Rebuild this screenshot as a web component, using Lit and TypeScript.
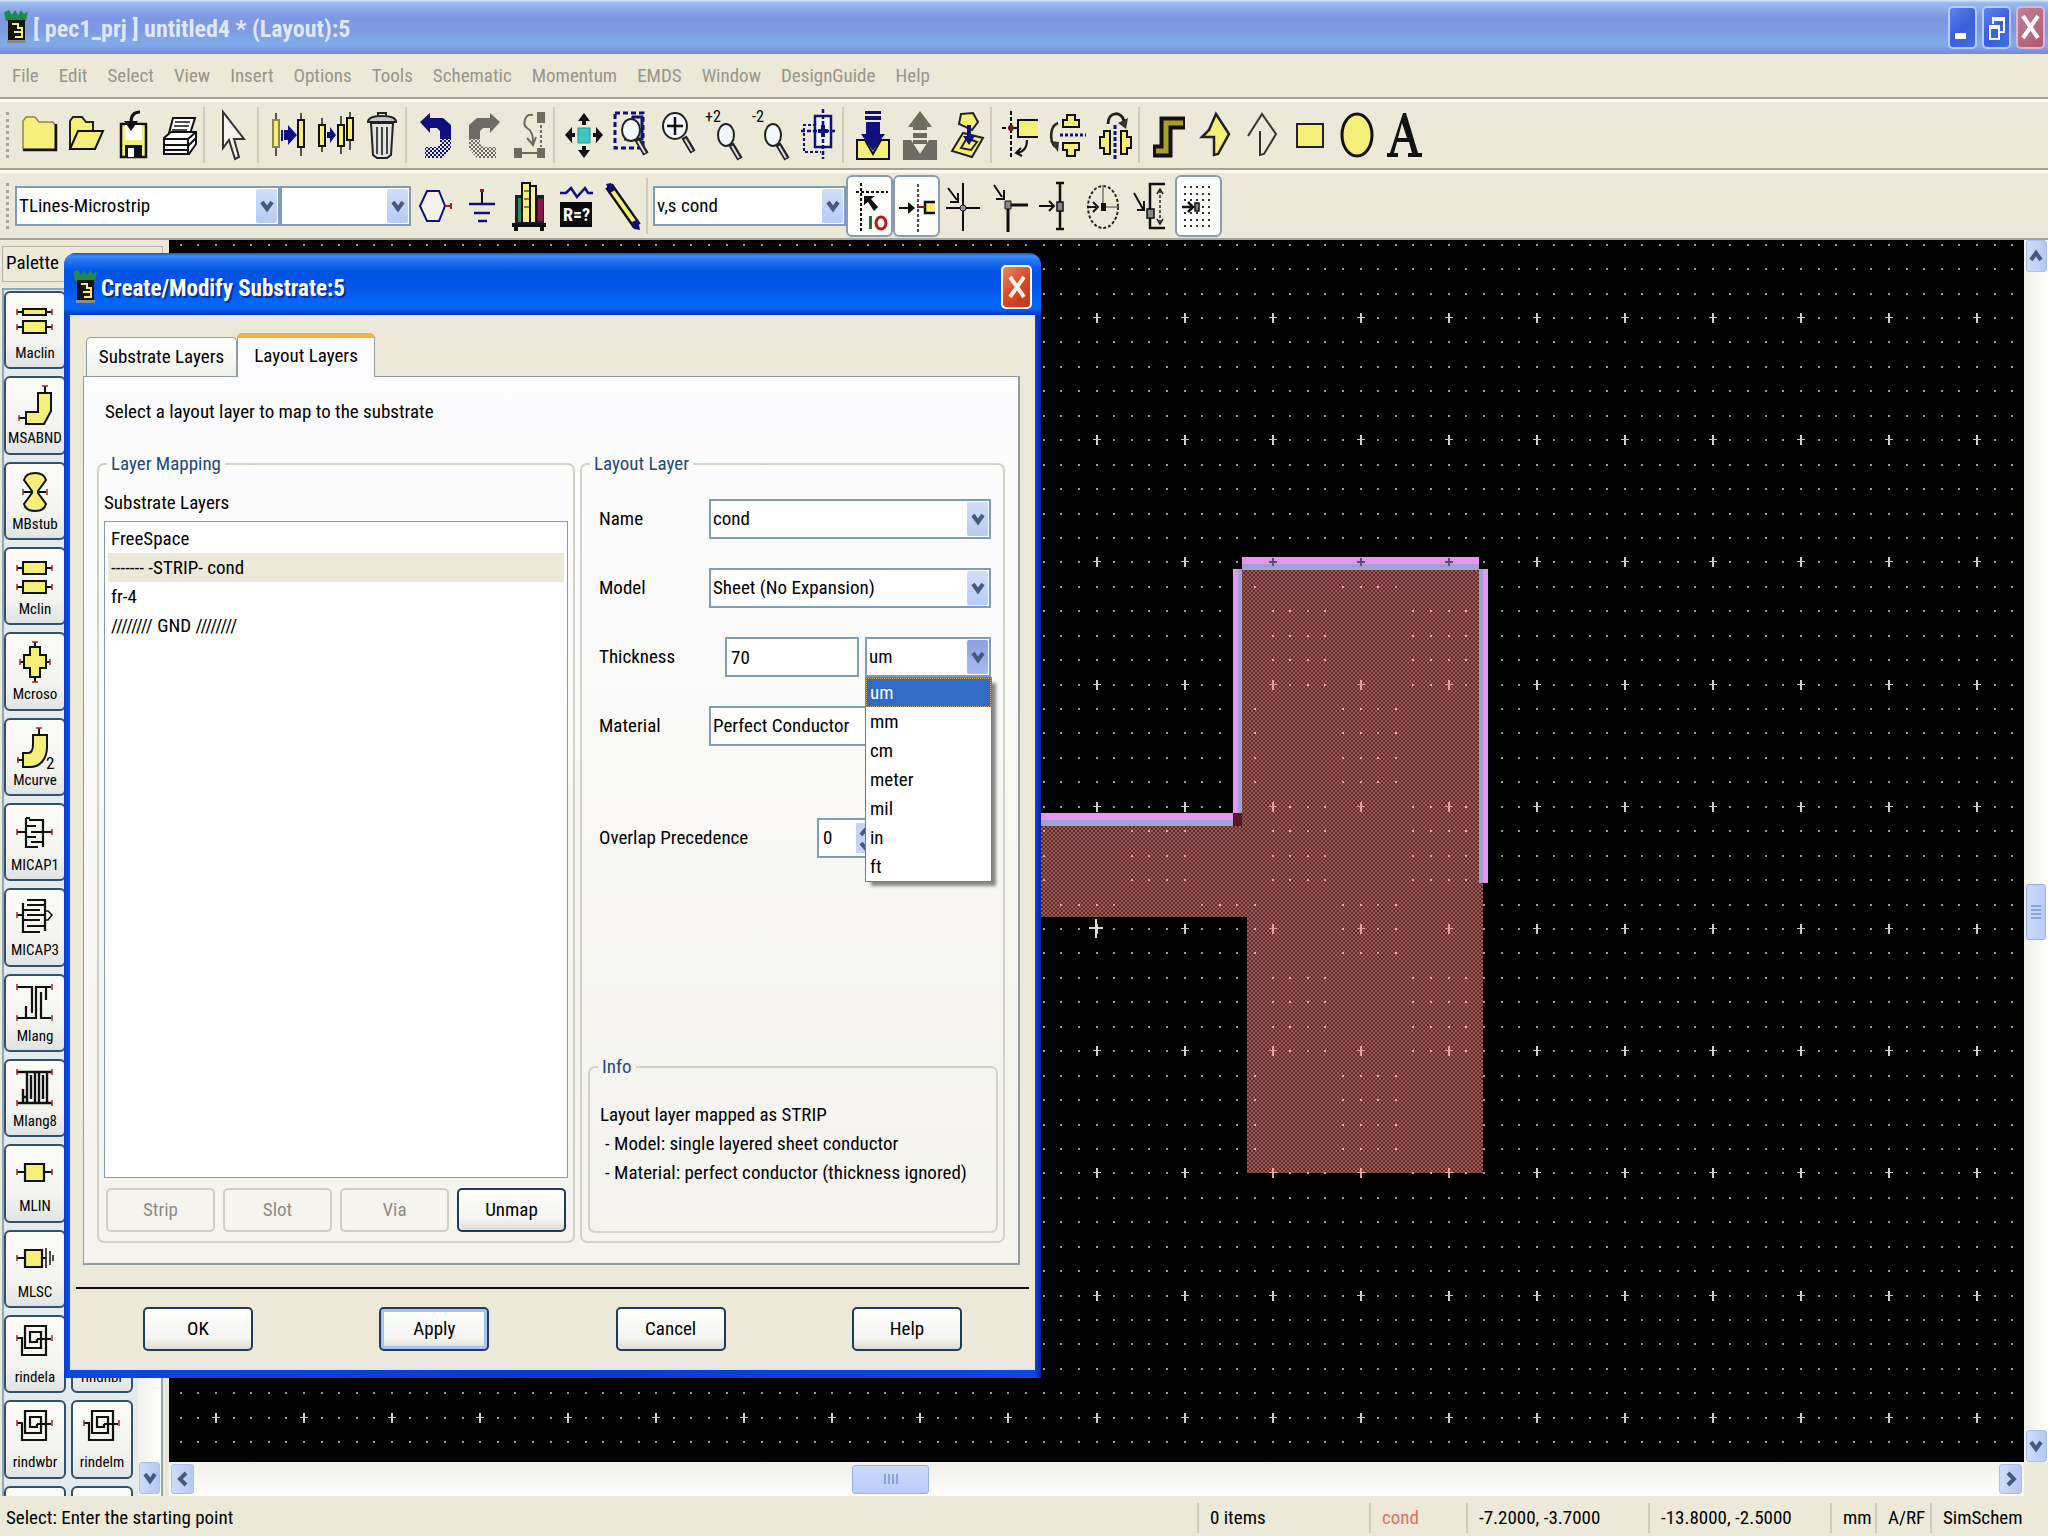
import { LitElement, html, svg, css, nothing } from "lit";
import { customElement, state } from "lit/decorators.js";
import { classMap } from "lit/directives/class-map.js";

const Y = "#f5ee78";
const N = "#10107c";
const G = "#6e6c62";

/* Toolbar icons share a 40 x 54 box. */
const lens = (cx: number, cy: number, r: number, ry: number) => svg`
  <ellipse cx=${cx} cy=${cy} rx=${r} ry=${ry} fill="#f4f8fa" stroke="#222" stroke-width="2"/>
  <path d=${`M${cx + r - 3} ${cy + ry - 2}l9 15`} stroke="#222" stroke-width="6"/>
  <path d=${`M${cx + r - 2} ${cy + ry}l7 12`} stroke="#ddd" stroke-width="2"/>`;

const checker = (id: string, color: string) => svg`<defs><pattern id=${id} width="4" height="4" patternUnits="userSpaceOnUse"><path d="M0 0h2v2H0zM2 2h2v2H2z" fill=${color}/></pattern></defs>`;

const icons: Record<string, unknown> = {
  folder: svg`<path d="M4 41V13l3-4h9l4 5h14l2 3v24z" fill=${Y} stroke="#8a8850" stroke-width="1.5"/><path d="M4 42h33V16" fill="none" stroke="#111" stroke-width="2.5"/>`,
  open: svg`<path d="M4 41V13l3-4h9l4 5h7v8" fill=${Y} stroke="#222" stroke-width="2"/><path d="M4 41l8-18h25l-8 18z" fill=${Y} stroke="#111" stroke-width="2"/>`,
  save: svg`<path d="M8 16h25v33H8z" fill=${Y} stroke="#111" stroke-width="2.5"/><path d="M12 17h17v15H12z" fill="#fff"/><path d="M12 37h17v12H12z" fill="#111"/><path d="M15 40h6v9h-6z" fill="#fff"/><path d="M27 4c-7 0-9 4-9 10" fill="none" stroke="#111" stroke-width="3"/><path d="M11 13h14l-7 10z" fill="#111"/>`,
  print: svg`<path d="M13 10h22l-6 19H8z" fill="#fff" stroke="#111" stroke-width="2"/><path d="M15 14h15M14 18h15M12 22h15M11 26h15" stroke="#111" stroke-width="1.5"/><path d="M4 30l7-6h25v12l-7 10H4z" fill="#fff" stroke="#111" stroke-width="2"/><path d="M4 31h24v15M4 37h24M4 42h24M28 31l8-7M28 38l8-8" fill="none" stroke="#111" stroke-width="2"/>`,
  arrow: svg`<path d="M9 4v36l6-8 6 19 4-2-5-18h10z" fill="#f6f5ee" stroke="#333" stroke-width="2"/>`,
  copy: svg`<path d="M8 5v43M33 5v43" stroke="#222" stroke-width="1.5"/><path d="M5 12h6v27H5z" fill=${Y} stroke="#8a8850" stroke-width="2"/><path d="M30 12h6v27h-6z" fill=${Y} stroke="#111" stroke-width="2"/><path d="M13 22h2v11h-2zM16 22h4v-5l9 10-9 10v-5h-4z" fill=${N}/>`,
  copymany: svg`<path d="M7 10v34M26 8v38M35 4v38" stroke="#222" stroke-width="1.5"/><path d="M4 17h6v21H4z" fill=${Y} stroke="#111" stroke-width="2"/><path d="M23 17h6v21h-6zM32 10h6v22h-6z" fill=${Y} stroke="#111" stroke-width="2"/><path d="M12 24h3v-5l6 8-6 8v-5h-3z" fill=${N}/>`,
  trash: svg`<path d="M9 15h22l-2 32-4 3H15l-4-3z" fill="#e4e4e0" stroke="#222" stroke-width="2"/><path d="M15 19v27M20 19v28M25 19v27" stroke="#444" stroke-width="2"/><path d="M6 14c0-5 6-6 14-6s14 1 14 6z" fill="#c8c8c4" stroke="#222" stroke-width="2"/><path d="M16 8V5h8v3" fill="none" stroke="#222" stroke-width="2"/>`,
  undo: svg`${checker("weave-navy", N)}<path d="M4 14L14 5v5h13l8 7v14H24v-8l-3-3h-7v5z" fill=${N}/><path d="M24 31h11v10l-8 9H9V39h12l3-3z" fill="url(#weave-navy)"/>`,
  redo: svg`${checker("weave-gray", G)}<path d="M37 14L27 5v5H14l-8 7v14h11v-8l3-3h7v5z" fill=${G}/><path d="M17 31H6v10l8 9h19V39H20l-3-3z" fill="url(#weave-gray)"/>`,
  goto: svg`<path d="M27 4h8v11h-8zM4 40h8v10H4zM27 40h8v10h-8z" fill=${G}/><path d="M12 45h15" stroke=${G} stroke-width="2"/><path d="M31 17v22" stroke=${G} stroke-width="2" stroke-dasharray="3 2"/><path d="M23 7c-8-2-11 9-6 13 5 3 6 7 6 16M17 30l6 7 3-8" fill="none" stroke=${G} stroke-width="2"/>`,
  move: svg`<path d="M14 20h12v15H14z" fill="#3cc8c0" stroke="#1a9890"/><path d="M20 5l6 8h-4v4h-4v-4h-4zM20 50l6-8h-4v-4h-4v4h-4zM1 27l7-8v6h3v4H8v6zM39 27l-7-8v6h-3v4h3v6z" fill="#111"/>`,
  zoomarea: svg`<path d="M4 5h28v35H4z" fill="none" stroke=${N} stroke-width="3" stroke-dasharray="5 3"/><path d="M22 9h9v22H15z" fill="none" stroke=${N} stroke-width="3"/>${lens(20, 22, 9, 11)}`,
  zoom: svg`${lens(17, 18, 12, 13)}<path d="M9 18h16M17 9v18" stroke="#111" stroke-width="2.5"/>`,
  zoomin: svg`<text x="0" y="14" font-size="16" font-family="Roboto Condensed, Liberation Sans, sans-serif">+2</text>${lens(21, 27, 8, 11)}`,
  zoomout: svg`<text x="0" y="14" font-size="16" font-family="Roboto Condensed, Liberation Sans, sans-serif">-2</text>${lens(21, 27, 8, 11)}`,
  fit: svg`<path d="M17 17H5v27h17" fill="none" stroke=${N} stroke-width="2" stroke-dasharray="3 2"/><path d="M16 8h16v31H16z" fill="#f2f6ff" stroke=${N} stroke-width="2.5"/><path d="M24 1v50M2 23h36" stroke=${N} stroke-width="2.5" stroke-dasharray="4 2"/><path d="M19 23h10M24 17v12" stroke=${N} stroke-width="4"/>`,
  pushdown: svg`<path d="M4 32h8l8 14 8-14h8v19H4z" fill=${Y} stroke="#111" stroke-width="2"/><path d="M12 3h16v3H12zM12 8h16v4H12zM13 14h14v12h5L20 43 8 26h5z" fill=${N}/>`,
  popup: svg`<path d="M3 32h8l9 14 9-14h8v20H3z" fill=${G}/><path d="M20 3l12 16h-5v3H13v-3H8zM13 25h14v5H13zM13 32h14v4H13z" fill=${G}/>`,
  insertinto: svg`<path d="M5 43l11-18 20 5-11 19z" fill=${Y} stroke="#222" stroke-width="2"/><path d="M14 6l12-1 5 9-6 8-13-6z" fill=${Y} stroke="#222" stroke-width="2"/><path d="M14 40l6-10 10 4-6 8z" fill="none" stroke="#222" stroke-width="2"/><path d="M20 17h4v11h4l-6 9-6-9h4z" fill=${N}/>`,
  rotate: svg`<path d="M10 3v48M1 20h16" stroke="#111" stroke-width="2" stroke-dasharray="4 2"/><path d="M37 12H17v17h20" fill=${Y} stroke="#111" stroke-width="2"/><circle cx="10" cy="20" r="3" fill="#6a2020"/><path d="M26 32c0 8-3 12-10 13M20 40l-5 5 6 3" fill="none" stroke="#111" stroke-width="2"/>`,
  mirrorx: svg`<path d="M15 19h16v-7h-4V7h-8v5h-4zM15 35h16v7h-4v6h-8v-6h-4z" fill=${Y} stroke="#111" stroke-width="2"/><path d="M12 27h26" stroke=${N} stroke-width="3" stroke-dasharray="3 2"/><path d="M10 15c-8 3-9 17-3 24" fill="none" stroke="#222" stroke-width="2.5"/><path d="M2 33l9 1-1 10z" fill="#333"/>`,
  mirrory: svg`<path d="M15 23v23H9v-6H5V29h4v-6zM26 23v23h6v-6h4V29h-4v-6z" fill=${Y} stroke="#111" stroke-width="2"/><path d="M20 17v36" stroke=${N} stroke-width="3" stroke-dasharray="4 2"/><path d="M13 16c0-13 14-13 16-3" fill="none" stroke="#222" stroke-width="3"/><path d="M33 10l-2 11-8-6z" fill="#333"/>`,
  trace: svg`<path d="M4 43h13V15h19" fill="none" stroke="#111" stroke-width="13"/><path d="M7 43h10V15h17" fill="none" stroke="#a89e28" stroke-width="5"/>`,
  polygon: svg`<path d="M20 6l13 20-11 20-4 1V29H6l7-7z" fill=${Y} stroke="#222" stroke-width="2.5"/>`,
  polyline: svg`<path d="M5 28L19 6l14 20-12 20-4 1V23" fill="none" stroke="#333" stroke-width="2"/>`,
  rect: svg`<path d="M7 16h26v23H7z" fill=${Y} stroke="#222" stroke-width="2"/>`,
  circle: svg`<ellipse cx="20" cy="27" rx="15" ry="21" fill=${Y} stroke="#111" stroke-width="3"/>`,
  text: svg`<path d="M19 5h3l12 40h4v4H24v-4h4l-3-11H13l-3 11h4v4H3v-4h3zM18 15l-4 15h9z" fill="#111" fill-rule="evenodd"/>`,
  port: svg`<path d="M12 12h12l6 15-6 15H12L5 27z" fill="#f4f2ea" stroke=${N} stroke-width="2"/><path d="M30 27h6M36 24v6" stroke="#a02020" stroke-width="2"/>`,
  ground: svg`<path d="M20 12v13" stroke="#111" stroke-width="2"/><path d="M18 10h4v3h-4z" fill="#a02020"/><path d="M7 25h26M12 34h16M16 42h9" stroke=${N} stroke-width="2.5"/>`,
  library: svg`<path d="M6 16h7v28H6zM27 16h8v28h-8z" fill="#222"/><path d="M29 20h5v22h-5z" fill="#8a1848"/><path d="M9 19h3v24H9z" fill="#2a8a6a"/><path d="M13 4h8v40h-8z" fill=${Y} stroke="#111" stroke-width="2"/><path d="M15 12h5M15 20h5M15 28h5" stroke="#111"/><path d="M21 7h6v37h-6z" fill="#f4f0a0" stroke="#111" stroke-width="2"/><path d="M3 44h34v4H3zM5 47h4v5H5zM31 47h4v5h-4z" fill="#111"/>`,
  variable: svg`<path d="M4 14h6l5-5 6 9 8-9 3 5h5" fill="none" stroke=${N} stroke-width="2.5"/><path d="M4 23h32v25H4z" fill="#0a0a0a"/><text x="7" y="42" font-size="18" font-weight="700" font-family="Roboto Condensed, Liberation Sans, sans-serif" fill="#fff">R=?</text>`,
  wire: svg`<path d="M6 7l28 40" stroke="#111" stroke-width="9"/><path d="M8 10l24 34" stroke=${Y} stroke-width="4"/><path d="M3 5l5-1 4 7-5 3zM29 43l6-3 2 11-6-1z" fill=${N}/>`,
  snap: svg`<path d="M11 4v48M6 13h32" stroke="#111" stroke-width="2" stroke-dasharray="3 2"/><path d="M14 17h11l-4 3 7 8-4 4-6-9-4 3z" fill="#111"/><path d="M19 37h3v13h-3z" fill="#207a20"/><ellipse cx="31" cy="44" rx="5" ry="6" fill="none" stroke="#b81818" stroke-width="3"/>`,
  snappin: svg`<path d="M21 5v48" stroke="#111" stroke-width="1.5" stroke-dasharray="3 2"/><path d="M2 28h9v-5l7 6-7 6v-5H2z" fill="#111"/><path d="M38 23H28v11h10" fill=${Y} stroke="#111" stroke-width="2.5"/><path d="M20 28h8" stroke="#722" stroke-width="2"/>`,
  snapcross: svg`<path d="M19 4v48M2 29h34" stroke="#111" stroke-width="2"/><path d="M4 9l9 12M14 14v9h-8" fill="none" stroke="#111" stroke-width="2"/><circle cx="19" cy="29" r="3" fill="#999" stroke="#111"/>`,
  snapcorner: svg`<path d="M17 53V26h20" fill="none" stroke="#111" stroke-width="3"/><path d="M3 6l8 12M13 11v9H5" fill="none" stroke="#111" stroke-width="2"/><path d="M14 22h6v8h-6z" fill="#888" stroke="#111"/>`,
  snapmid: svg`<path d="M22 4v46M18 4h8M18 50h8" stroke="#111" stroke-width="2.5"/><path d="M1 27h14M11 22l5 5-5 5" fill="none" stroke="#111" stroke-width="2"/><path d="M19 23h6v9h-6z" fill="#888" stroke="#111" stroke-width="1.5"/>`,
  snaparc: svg`<ellipse cx="18" cy="28" rx="15" ry="21" fill="none" stroke="#222" stroke-width="2" stroke-dasharray="3 2"/><path d="M18 6v22h15" fill="none" stroke="#777" stroke-width="1.5"/><path d="M2 28h9M8 23l5 5-5 5" fill="none" stroke="#111" stroke-width="2"/><path d="M16 24h5v8h-5z" fill="#111"/>`,
  snapedge: svg`<path d="M33 5H18v44h15" fill="none" stroke="#111" stroke-width="2.5"/><path d="M28 11v33" stroke="#222" stroke-width="1.5" stroke-dasharray="3 2"/><path d="M25 15l3-5 3 5M25 40l3 5 3-5" fill="none" stroke="#222" stroke-width="1.5"/><path d="M2 14l9 16M12 22v9H5" fill="none" stroke="#111" stroke-width="2"/><path d="M15 30h7v9h-7z" fill="#888" stroke="#111" stroke-width="1.5"/>`,
  snapgrid: svg`<path d="M5 8h30M5 15h30M5 21h30M5 34h30M5 41h30M5 47h30M23 28h12" stroke="#333" stroke-width="2" stroke-dasharray="2 4"/><path d="M3 28h9M9 23l5 5-5 5" fill="none" stroke="#111" stroke-width="2.5"/><path d="M16 24h4v8h-4z" fill="#888" stroke="#111" stroke-width="1.5"/>`,
};

/* Palette symbols share a 40 x 44 box. */
const ports = (y: number, a = 8, b = 31) => svg`
  <path d=${`M2 ${y}H${a}M${b} ${y}H37`} stroke="#111" stroke-width="2"/>
  <path d=${`M2 ${y - 3}v6M37 ${y - 3}v6`} stroke="#a02828" stroke-width="1.5"/>`;
const spiral = svg`<path d="M2 15h5v17h24V3H10v22h16V9H15v10h7v-3" fill="none" stroke="#111" stroke-width="2.2"/><path d="M22 16h14" stroke="#111" stroke-width="2"/><path d="M2 12v6M37 12v6" stroke="#a02828" stroke-width="1.5"/>`;

const symbols: Record<string, unknown> = {
  Maclin: svg`${ports(13)}${ports(28)}<path d="M8 10h23v6H8zM8 22h23v12H8z" fill=${Y} stroke="#111" stroke-width="2"/>`,
  MSABND: svg`<path d="M11 28h12V9h13v18l-7 13H11z" fill=${Y} stroke="#111" stroke-width="2"/><path d="M4 34h7M30 2v7" stroke="#111" stroke-width="2"/><path d="M4 31v6M27 2h6" stroke="#a02828" stroke-width="1.5"/>`,
  MBstub: svg`<path d="M8 22h23" stroke="#111" stroke-width="2"/><path d="M8 19v6M32 19v6" stroke="#a02828" stroke-width="1.5"/><path d="M17 21L9 10c1-4 4-7 11-7s10 3 11 7l-8 11v2l8 11c-1 4-4 7-11 7s-10-3-11-7l8-11z" fill=${Y} stroke="#111" stroke-width="2"/>`,
  Mclin: svg`${ports(13)}${ports(32)}<path d="M8 7h23v12H8zM8 26h23v12H8z" fill=${Y} stroke="#111" stroke-width="2"/>`,
  Mcroso: svg`<path d="M5 22h30M20 2v40" stroke="#111" stroke-width="2"/><path d="M5 19v6M35 19v6M17 2h6M17 42h6" stroke="#a02828" stroke-width="1.5"/><path d="M15 7h10v8h6v13h-6v9H15v-9H9V15h6z" fill=${Y} stroke="#111" stroke-width="2"/>`,
  Mcurve: svg`<path d="M24 2v8M2 34h7" stroke="#111" stroke-width="2"/><path d="M21 2h6M3 31v6" stroke="#a02828" stroke-width="1.5"/><path d="M18 9h14v12c0 12-7 20-17 20H8V27h5c4 0 5-4 5-9z" fill=${Y} stroke="#111" stroke-width="2"/><text x="31" y="43" font-size="17" font-family="Roboto Condensed, Liberation Sans, sans-serif">2</text>`,
  MICAP1: svg`${ports(21, 10, 28)}<path d="M11 7v29h12M11 15h10M11 26h10M11 36h12M14 9h14v27M28 21H16M28 31H16M11 7h4" fill="none" stroke="#111" stroke-width="2.2"/>`,
  MICAP3: svg`<path d="M2 19h6" stroke="#111" stroke-width="2"/><path d="M2 16v6" stroke="#a02828" stroke-width="1.5"/><path d="M8 7v29h17M8 14h17M8 24h17M12 4h18v31M30 9H12M30 19H12M30 30H12" fill="none" stroke="#111" stroke-width="2.2"/><path d="M31 15h2l4 4-4 5h-2" fill="none" stroke="#111" stroke-width="1.5"/>`,
  Mlang: svg`<path d="M2 5h15v26M36 5H21v31H2M26 10v26h10M31 5v13M11 24v12" fill="none" stroke="#111" stroke-width="2.2"/><path d="M2 2v6M37 2v6M2 33v6M37 33v6" stroke="#a02828" stroke-width="1.5"/>`,
  Mlang8: svg`<path d="M2 5h35M2 36h35M8 22v14M12 5v24M12 12v24M16 8v24M20 5v31M24 5v31M24 12v24M28 8v24M32 5v31M8 30h4" fill="none" stroke="#111" stroke-width="2.4"/><path d="M2 2v6M37 2v6M2 33v6M37 33v6" stroke="#a02828" stroke-width="1.5"/>`,
  MLIN: svg`${ports(20, 10, 29)}<path d="M10 12h19v17H10z" fill=${Y} stroke="#111" stroke-width="2.2"/>`,
  MLSC: svg`<path d="M2 20h8M27 20h4" stroke="#111" stroke-width="2"/><path d="M2 17v6" stroke="#a02828" stroke-width="1.5"/><path d="M10 12h17v17H10z" fill=${Y} stroke="#111" stroke-width="2.2"/><path d="M31 10v20M35 13v14M38 17v6" stroke="#111" stroke-width="1.5"/>`,
  rindela: spiral,
  rindnbr: spiral,
  rindwbr: spiral,
  rindelm: spiral,
};

const glyph = (body: unknown, w = 40, h = 54) =>
  html`<svg width=${w} height=${h} viewBox=${`0 0 ${w} ${h}`} aria-hidden="true">${body}</svg>`;

const chevron = (dir: "up" | "down" | "left" | "right") => {
  const d = { up: "M3 12l5-7 5 7", down: "M3 4l5 7 5-7", left: "M11 2L5 8l6 6", right: "M5 2l6 6-6 6" }[dir];
  return html`<svg width="16" height="16" viewBox="0 0 16 16" aria-hidden="true"><path d=${d} fill="none" stroke="#46597e" stroke-width="4"/></svg>`;
};

const appMark = html`<svg width="24" height="36" viewBox="0 0 24 36" aria-hidden="true">
  <path d="M0 3l2 9h20l2-10-4 3-3-4-3 5-3-5-3 5-3-5z" fill="#1f8a4c"/>
  <path d="M4 11h17v20H4z" fill="#14140c"/><path d="M3 31h19v3H3z" fill="#8a8a90"/>
  <path d="M8 15h6v4h4v4h-8M18 23v5h-7" fill="none" stroke="#f2e88a" stroke-width="2"/></svg>`;

/* Drawing grid: minor dots with a cross at every fifth point. */
const STEP_X = 88.05 / 5;
const STEP_Y = 122.2 / 5;
const MOIRE_ROWS = [2, 3, 4, 5, 10, 11, 12, 13, 17, 18, 19, 20, 25];
const px = (i: number) => Math.round(46 + i * STEP_X);
const py = (j: number) => Math.round(77 + j * STEP_Y);

function inStrip(x: number, y: number) {
  return (x > 1073 && x < 1314 && y > 330 && y < 933) || (x < 1080 && x > 850 && y > 586 && y < 677);
}

function buildGrid() {
  let dots = "";
  let faint = "";
  let crosses = "";
  let faintCrosses = "";
  for (let j = -3; py(j) < 1220; j++) {
    for (let i = -2; px(i) < 1853; i++) {
      const x = px(i);
      const y = py(j);
      const inside = inStrip(x, y);
      const major = i % 5 === 0 && j % 5 === 0;
      if (major) {
        const c = `M${x - 3} ${y}h8v1h-8zM${x} ${y - 4}h2v10h-2z`;
        if (inside) faintCrosses += c;
        else crosses += c;
        continue;
      }
      const dot = `M${x} ${y}h2v2h-2z`;
      if (!inside) dots += dot;
      else {
        const even = Math.floor((i - 60) / 4) % 2 === 0;
        if (even === MOIRE_ROWS.includes(j - 10)) faint += dot;
      }
    }
  }
  return { dots, faint, crosses, faintCrosses };
}
const grid = buildGrid();

const drawing = svg`
  <defs>
    <pattern id="dither" width="4" height="4" patternUnits="userSpaceOnUse">
      <rect width="4" height="4" fill="#5c2a2a"/>
      <rect width="2" height="2" fill="#a25c56"/>
      <rect x="2" y="2" width="2" height="2" fill="#a25c56"/>
    </pattern>
  </defs>
  <path d="M850 585H1073V330H1314V933H1078V677H850z" fill="url(#dither)"/>
  <path d=${grid.dots} fill="#9c9c9c"/>
  <path d=${grid.faint} fill="#e8a8a0"/>
  <path d=${grid.crosses} fill="#cfcfcf"/>
  <path d=${grid.faintCrosses} fill="#e8a0a0"/>
  <path d="M920 688h14M927 679v19" stroke="#dcdcdc" stroke-width="2"/>
  <path d="M1064 573h9v13h-9z" fill="#5a1420"/>
  <path d="M1073 317h237v7h-237zM1064 329h5v244h-5zM1314 329h5v314h-5zM850 573h214v7H850z" fill="#e794f2"/>
  <path d="M1073 324h237v6h-237zM1069 329h4v244h-4zM1310 329h4v314h-4zM850 580h214v6H850z" fill="#9fa2d6"/>
  <path d="M1100 322h8M1104 318v8M1188 322h8M1192 318v8M1276 322h8M1280 318v8" stroke="#5a4a80" stroke-width="2"/>`;

const menus = ["File", "Edit", "Select", "View", "Insert", "Options", "Tools", "Schematic", "Momentum", "EMDS", "Window", "DesignGuide", "Help"];

const commandGroups: [string, string][][] = [
  [["folder", "New"], ["open", "Open"], ["save", "Save"], ["print", "Print"]],
  [["arrow", "End command"]],
  [["copy", "Copy"], ["copymany", "Step and repeat"], ["trash", "Delete"]],
  [["undo", "Undo"], ["redo", "Redo"], ["goto", "Swap"]],
  [["move", "Pan"], ["zoomarea", "Zoom area"], ["zoom", "Zoom point"], ["zoomin", "Zoom in"], ["zoomout", "Zoom out"], ["fit", "View all"]],
  [["pushdown", "Push into"], ["popup", "Pop out"], ["insertinto", "Insert component"]],
  [["rotate", "Rotate"], ["mirrorx", "Mirror X"], ["mirrory", "Mirror Y"]],
  [["trace", "Trace"], ["polygon", "Polygon"], ["polyline", "Polyline"], ["rect", "Rectangle"], ["circle", "Circle"], ["text", "Text"]],
];
const placeTools: [string, string][] = [["port", "Port"], ["ground", "Ground"], ["library", "Library"], ["variable", "Variable"], ["wire", "Wire"]];
const snapTools: [string, string, boolean][] = [
  ["snap", "Snap enabled", true],
  ["snappin", "Pin snap", true],
  ["snapcross", "Intersect snap", false],
  ["snapcorner", "Vertex snap", false],
  ["snapmid", "Midpoint snap", false],
  ["snaparc", "Arc center snap", false],
  ["snapedge", "Edge snap", false],
  ["snapgrid", "Grid snap", true],
];

const paletteLeft = ["Maclin", "MSABND", "MBstub", "Mclin", "Mcroso", "Mcurve", "MICAP1", "MICAP3", "Mlang", "Mlang8", "MLIN", "MLSC", "rindela", "rindwbr"];
const paletteRight = ["rindnbr", "rindelm"];
const units = ["um", "mm", "cm", "meter", "mil", "in", "ft"];
const layers = ["FreeSpace", "------- -STRIP- cond", "fr-4", "//////// GND ////////"];

const base = css`
  :host { box-sizing: border-box; }
  *, *::before, *::after { box-sizing: border-box; }
  button, input, select { font: inherit; color: inherit; margin: 0; padding: 0; border: 0; border-radius: 0; background: none; }
  svg { display: block; flex: none; }
  .combo { position: relative; display: flex; }
  .combo select { appearance: none; width: 100%; height: 40px; padding: 0 28px 0 2px; border: 2px solid #7f9db9; background: #fff; color: #000; }
  .combo .drop { position: absolute; top: 3px; right: 3px; bottom: 3px; width: 21px; display: grid; place-items: center; background: linear-gradient(#d2defc, #b6cbf6); border-radius: 2px; pointer-events: none; }
  .combo .drop.hot { background: linear-gradient(#8f9fe4, #a9bdf0); }
  .caption { display: grid; place-items: center; border: 2px solid #dfe6fa; border-radius: 5px; }
`;

@customElement("substrate-dialog")
export class SubstrateDialog extends LitElement {
  static styles = [
    base,
    css`
      :host { display: block; padding: 0 6px 8px; background: linear-gradient(90deg, #0a3ad0 0, #0b48dc 4px, #0a3ad0 50%, #0b48dc calc(100% - 6px), #061f9c 100%); border-radius: 12px 12px 0 0; }
      .title { display: flex; align-items: center; gap: 4px; height: 62px; margin: 0 -6px; padding: 6px 9px 0 9px; border-radius: 12px 12px 0 0; background: linear-gradient(#1b52c8 0, #3d8cfa 3px, #2474f4 8px, #0153e2 18px, #0256ea 36px, #0466fc 48px, #0462f4 56px, #0038b4 62px); color: #fff; font-weight: 700; font-size: 23px; }
      .title h2 { flex: 1; margin: 0; padding-top: 4px; font: inherit; text-shadow: 2px 2px #0a2f90; }
      .close { width: 31px; height: 44px; border-color: #fff; background: linear-gradient(135deg, #e8886a, #d8482a 50%, #c03a1c); }
      .body { background: #ece9d8; box-shadow: inset 0 8px 8px -6px #e4e6f4, inset 0 -8px 6px -4px #e0e4f8; padding: 18px 0 19px; }
      .tabs { display: flex; align-items: flex-end; padding-left: 16px; }
      .tab { height: 39px; width: 151px; border: 1px solid #919b9c; border-bottom: 0; border-radius: 5px 5px 0 0; background: linear-gradient(#fff, #f0f0ea); }
      .tab.active { position: relative; width: 138px; height: 44px; margin-bottom: -1px; padding-bottom: 4px; border-top: 5px solid #f0b04c; background: #fcfcfe; z-index: 1; }
      .pane { margin: 0 15px 0 13px; padding: 21px 13px 20px 13px; border: 1px solid #919b9c; border-right-width: 2px; border-bottom-width: 2px; background: linear-gradient(#fcfcfe, #f4f3ee); }
      .intro { margin: 0 0 24px 8px; line-height: 28px; }
      .groups { display: grid; grid-template-columns: 478fr 425fr; gap: 5px; }
      fieldset { display: flex; flex-direction: column; min-width: 0; margin: 0; padding: 0; border: 2px solid #d3d2c6; border-radius: 7px; }
      legend { margin-left: 8px; padding: 0 4px; line-height: 28px; color: #1e4a78; }
      .mapping { padding: 11px 5px 9px; line-height: 28px; }
      .list { min-height: 657px; margin: 4px 0 10px; padding: 2px 3px; border: 1px solid #7f9db9; background: #fff; list-style: none; }
      .list li { height: 29px; line-height: 29px; padding-left: 3px; white-space: pre; }
      .list li.on { background: #ece9d8; }
      .actions { display: grid; grid-template-columns: repeat(4, 1fr); gap: 8px; padding: 0 2px; }
      .btn { height: 44px; border: 2px solid #1c3c60; border-radius: 5px; background: linear-gradient(#fff, #f5f5f2 70%, #e0ddd2); color: #000; }
      .btn:disabled { border-color: #cfcec0; background: #f5f4ee; color: #8c8c84; }
      .btn.default { box-shadow: inset 0 0 0 3px #a6c2f4; }
      .form { display: grid; grid-template-columns: minmax(0, 1fr) 282px; align-items: center; row-gap: 29px; padding: 21px 12px 0 17px; }
      .form label { white-space: nowrap; }
      .field { display: flex; gap: 6px; }
      .field.value { padding-left: 16px; }
      .field > .combo { flex: 1; }
      .box { width: 134px; height: 40px; padding: 0 4px; border: 2px solid #7f9db9; background: #fff; }
      .overlap { margin-top: 43px; }
      .spin { padding-left: 108px; }
      .spin .frame { display: flex; width: 90px; height: 40px; border: 2px solid #7f9db9; background: #fff; }
      .spin input { width: 37px; padding-left: 4px; border: 0; background: none; }
      .steps { display: grid; place-items: center; width: 20px; margin: 3px 0; background: #c3d3fb; }
      .unit { position: relative; }
      .popup { position: absolute; top: 40px; left: 0; width: 127px; margin: 0; padding: 0; border: 1px solid #6c7c8c; background: #fff; list-style: none; box-shadow: 5px 5px 3px -1px rgba(60, 60, 60, 0.6); z-index: 2; }
      .popup li { height: 29px; line-height: 29px; padding-left: 4px; }
      .popup li.on { background: #316ac5; color: #fff; outline: 1px dotted #d8a860; outline-offset: -1px; }
      .info { margin: auto 5px 8px 6px; }
      .info p { margin: 0; padding: 19px 0 44px 10px; line-height: 29px; white-space: pre-line; }
      .info span { display: block; padding-left: 5px; }
      .rule { height: 2px; margin: 22px 6px 18px; border: 0; background: #111; }
      .footer { display: flex; justify-content: space-between; padding: 0 73px; }
      .footer .btn { width: 110px; }
    `,
  ];

  @state() private layer = 1;
  @state() private unit = "um";

  private combo(id: string, value: string) {
    return html`<div class="combo"><select id=${id}><option>${value}</option></select><span class="drop">${chevron("down")}</span></div>`;
  }

  render() {
    return html`
      <div class="title">
        ${appMark}
        <h2>Create/Modify Substrate:5</h2>
        <button class="caption close" aria-label="Close"><svg width="20" height="28" viewBox="0 0 20 28"><path d="M3 4l14 20M17 4L3 24" stroke="#fff4e4" stroke-width="4"/></svg></button>
      </div>
      <div class="body">
        <div class="tabs" role="tablist">
          <button class="tab" role="tab" aria-selected="false">Substrate Layers</button>
          <button class="tab active" role="tab" aria-selected="true">Layout Layers</button>
        </div>
        <div class="pane" role="tabpanel">
          <p class="intro">Select a layout layer to map to the substrate</p>
          <div class="groups">
            <fieldset>
              <legend>Layer Mapping</legend>
              <div class="mapping">
                <div id="layers-label">Substrate Layers</div>
                <ul class="list" role="listbox" aria-labelledby="layers-label">
                  ${layers.map((l, i) => html`<li role="option" aria-selected=${i === this.layer} class=${classMap({ on: i === this.layer })} @click=${() => (this.layer = i)}>${l}</li>`)}
                </ul>
                <div class="actions">
                  <button class="btn" disabled>Strip</button>
                  <button class="btn" disabled>Slot</button>
                  <button class="btn" disabled>Via</button>
                  <button class="btn">Unmap</button>
                </div>
              </div>
            </fieldset>
            <fieldset>
              <legend>Layout Layer</legend>
              <div class="form">
                <label for="name">Name</label>
                ${this.combo("name", "cond")}
                <label for="model">Model</label>
                ${this.combo("model", "Sheet (No Expansion)")}
                <label for="thickness">Thickness</label>
                <div class="field value">
                  <input class="box" id="thickness" .value=${"70"} />
                  <div class="combo unit">
                    <select aria-label="Thickness unit" .value=${this.unit}>${units.map((u) => html`<option ?selected=${u === this.unit}>${u}</option>`)}</select>
                    <span class="drop hot">${chevron("down")}</span>
                    <ul class="popup" role="listbox" aria-label="Thickness unit">
                      ${units.map((u) => html`<li role="option" aria-selected=${u === this.unit} class=${classMap({ on: u === this.unit })} @click=${() => (this.unit = u)}>${u}</li>`)}
                    </ul>
                  </div>
                </div>
                <label for="material">Material</label>
                ${this.combo("material", "Perfect Conductor")}
                <label class="overlap" for="overlap">Overlap Precedence</label>
                <div class="spin overlap">
                  <div class="frame">
                    <input id="overlap" .value=${"0"} />
                    <span class="steps"><svg width="14" height="32" viewBox="0 0 14 32"><path d="M2 12l5-6 5 6M2 20l5 6 5-6" fill="none" stroke="#46597e" stroke-width="4"/></svg></span>
                  </div>
                </div>
              </div>
              <fieldset class="info">
                <legend>Info</legend>
                <p>Layout layer mapped as STRIP<span>- Model: single layered sheet conductor</span><span>- Material: perfect conductor (thickness ignored)</span></p>
              </fieldset>
            </fieldset>
          </div>
        </div>
        <hr class="rule" />
        <div class="footer">
          <button class="btn">OK</button>
          <button class="btn default">Apply</button>
          <button class="btn">Cancel</button>
          <button class="btn">Help</button>
        </div>
      </div>
    `;
  }
}

@customElement("app-root")
export class AppRoot extends LitElement {
  static styles = [
    base,
    css`
      :host { position: relative; display: flex; flex-direction: column; height: 100vh; overflow: hidden; background: #ece9d8; color: #000; font: 19px/24px "Roboto Condensed", "Liberation Sans", sans-serif; }
      .titlebar { display: flex; align-items: center; gap: 5px; flex: none; height: 54px; padding: 0 3px 0 4px; background: linear-gradient(#d8e6fa 0, #98b8f0 3px, #8cb0ee 8px, #7c98e2 18px, #7e9ae2 32px, #80aaea 40px, #80a8e8 46px, #7886d4 54px); }
      .titlebar h1 { flex: 1; margin: 0; padding-top: 4px; font-size: 24px; font-weight: 700; color: #dfe8fa; }
      .titlebar .caption { width: 29px; height: 43px; background: linear-gradient(135deg, #5c84f0, #3a60dc 50%, #3f6ce8); border-color: #b8ccf6; }
      .titlebar .caption.quit { background: linear-gradient(135deg, #c08098, #b05a70); border-color: #d8b8d8; }
      .menu { display: flex; align-items: center; gap: 20px; flex: none; height: 45px; padding: 0 12px; border-bottom: 2px solid #a5a294; color: #97958a; }
      .bar { display: flex; align-items: center; flex: none; border-top: 3px solid #fbfaf5; border-bottom: 2px solid #a5a294; }
      .bar.commands { height: 71px; padding-left: 6px; }
      .bar.modes { height: 70px; padding-left: 6px; }
      .grip { width: 9px; height: 46px; border-left: 3px dotted #a8a598; }
      .tool { display: grid; place-items: center; width: 47px; height: 62px; border-radius: 6px; }
      .tool.on { border: 2px solid #8a9cb4; background: #fdfdfc; }
      .sep { width: 7px; height: 56px; border-left: 2px solid #cfccbc; }
      .sep:last-child { display: none; }
      .family { width: 265px; }
      .part { width: 131px; }
      .layer { width: 193px; }
      .main { display: flex; flex: 1; min-height: 0; }
      .side { display: flex; flex-direction: column; width: 169px; padding: 6px 6px 0 2px; min-height: 0; overflow: hidden; }
      .side h2 { margin: 0 0 6px; padding: 4px 3px; height: 36px; border: 1px solid #b4b09c; font-size: 19px; font-weight: 400; }
      .palette { display: flex; flex: 1; min-height: 0; overflow: hidden; border: 2px solid #8aa8c0; border-bottom: 0; background: #e2ecee; padding-top: 1px; }
      .cells { display: grid; grid-template-columns: 62px 62px; grid-template-rows: repeat(15, 1fr); gap: 7px 5px; margin-bottom: -68px; }
      .cell { grid-column: 1; display: flex; flex-direction: column; align-items: center; padding-top: 6px; border: 2px solid #35506a; border-radius: 6px; background: linear-gradient(#fcfcfa, #f2f2ee 70%, #dfe4e4); font-size: 15px; line-height: 20px; }
      .cell.right { grid-column: 2; }
      .cell.r12 { grid-row: 13; }
      .cell.r13 { grid-row: 14; }
      .cell.r14 { grid-row: 15; }
      .track { display: flex; flex-direction: column; align-items: center; background: linear-gradient(90deg, #f0f0ec, #fefefe); }
      .palette .track { flex: 1; justify-content: flex-end; margin-left: 5px; padding-bottom: 2px; }
      .view { display: grid; flex: 1; min-width: 0; grid-template-columns: 1fr 24px; grid-template-rows: 1fr 34px; }
      .canvas { overflow: hidden; background: #000; min-height: 0; min-width: 0; }
      .track.across { flex-direction: row; background: linear-gradient(#f0f0ec, #fefefe); padding: 0 2px; }
      .arrow { display: grid; place-items: center; width: 21px; height: 32px; border: 1px solid #a8c0ea; border-radius: 3px; background: linear-gradient(90deg, #d0dcfa, #b4c8f4); }
      .across .arrow { width: 23px; height: 30px; }
      .thumb { display: grid; place-items: center; width: 20px; height: 56px; border: 1px solid #98b0e0; border-radius: 3px; background: linear-gradient(90deg, #cddafc, #b8ccf8); }
      .across .thumb { width: 77px; height: 29px; background: linear-gradient(#cddafc, #b8ccf8); }
      .g13 { flex: 13; }
      .g8 { flex: 8; }
      .g5 { flex: 5; }
      .g4 { flex: 4; }
      .status { display: grid; grid-template-columns: 1fr 172px 97px 182px 182px 45px 55px 118px; align-items: center; flex: none; height: 40px; padding: 4px 0 0 6px; }
      .status span + span { border-left: 2px solid #cfccbc; padding-left: 11px; line-height: 30px; white-space: nowrap; }
      .status .layername { color: #dc7060; }
      substrate-dialog { position: absolute; left: 64px; top: 253px; width: 977px; }
    `,
  ];

  private cell(name: string, extra = "") {
    return html`<button class="cell ${extra}" aria-label=${name || "More"}>${name ? html`${glyph(symbols[name], 40, 44)}<span>${name}</span>` : nothing}</button>`;
  }

  render() {
    return html`
      <header class="titlebar">
        ${appMark}
        <h1>[ pec1_prj ] untitled4 * (Layout):5</h1>
        <button class="caption" aria-label="Minimize"><svg width="21" height="34" viewBox="0 0 21 34"><path d="M3 23h11v6H3z" fill="#fff"/></svg></button>
        <button class="caption" aria-label="Restore"><svg width="21" height="34" viewBox="0 0 21 34"><path d="M7 14V8h11v14h-4" fill="none" stroke="#fff" stroke-width="2"/><path d="M7 7h12v4H7zM3 15h11v4H3z" fill="#fff"/><path d="M4 16h9v13H4z" fill="none" stroke="#fff" stroke-width="2"/></svg></button>
        <button class="caption quit" aria-label="Close"><svg width="21" height="30" viewBox="0 0 21 30"><path d="M3 4l15 22M18 4L3 26" stroke="#fff" stroke-width="4"/></svg></button>
      </header>
      <nav class="menu">${menus.map((m) => html`<button>${m}</button>`)}</nav>
      <div class="bar commands" role="toolbar" aria-label="Commands">
        <i class="grip"></i>
        ${commandGroups.map((g) => html`${g.map(([icon, label]) => html`<button class="tool" aria-label=${label}>${glyph(icons[icon])}</button>`)}<i class="sep"></i>`)}
      </div>
      <div class="bar modes" role="toolbar" aria-label="Modes">
        <i class="grip"></i>
        <div class="combo family"><select aria-label="Palette family"><option>TLines-Microstrip</option></select><span class="drop">${chevron("down")}</span></div>
        <div class="combo part"><select aria-label="Component"><option></option></select><span class="drop">${chevron("down")}</span></div>
        ${placeTools.map(([icon, label]) => html`<button class="tool" aria-label=${label}>${glyph(icons[icon])}</button>`)}
        <i class="sep"></i>
        <div class="combo layer"><select aria-label="Entry layer"><option>v,s cond</option></select><span class="drop">${chevron("down")}</span></div>
        ${snapTools.map(([icon, label, on]) => html`<button class=${classMap({ tool: true, on })} aria-label=${label} aria-pressed=${on}>${glyph(icons[icon])}</button>`)}
      </div>
      <div class="main">
        <aside class="side">
          <h2>Palette</h2>
          <div class="palette">
            <div class="cells">
              ${paletteLeft.map((n) => this.cell(n))}
              ${this.cell("", "r14")}
              ${paletteRight.map((n, i) => this.cell(n, `right r${12 + i}`))}
              ${this.cell("", "right r14")}
            </div>
            <div class="track"><button class="arrow" aria-label="Scroll palette down">${chevron("down")}</button></div>
          </div>
        </aside>
        <div class="view">
          <div class="canvas"><svg width="1855" height="1222" viewBox="0 0 1855 1222" role="img" aria-label="Layout drawing" shape-rendering="crispEdges">${drawing}</svg></div>
          <div class="track">
            <button class="arrow" aria-label="Scroll up">${chevron("up")}</button>
            <span class="g5"></span>
            <div class="thumb"><svg width="12" height="16" viewBox="0 0 12 16"><path d="M1 2h10M1 6h10M1 10h10M1 14h10" stroke="#8ca4dc" stroke-width="2"/></svg></div>
            <span class="g4"></span>
            <button class="arrow" aria-label="Scroll down">${chevron("down")}</button>
          </div>
          <div class="track across">
            <button class="arrow" aria-label="Scroll left">${chevron("left")}</button>
            <span class="g8"></span>
            <div class="thumb"><svg width="16" height="12" viewBox="0 0 16 12"><path d="M2 1v10M6 1v10M10 1v10M14 1v10" stroke="#8ca4dc" stroke-width="2"/></svg></div>
            <span class="g13"></span>
            <button class="arrow" aria-label="Scroll right">${chevron("right")}</button>
          </div>
        </div>
      </div>
      <footer class="status">
        <span>Select: Enter the starting point</span>
        <span>0 items</span>
        <span class="layername">cond</span>
        <span>-7.2000, -3.7000</span>
        <span>-13.8000, -2.5000</span>
        <span>mm</span>
        <span>A/RF</span>
        <span>SimSchem</span>
      </footer>
      <substrate-dialog role="dialog" aria-label="Create/Modify Substrate:5"></substrate-dialog>
    `;
  }
}
